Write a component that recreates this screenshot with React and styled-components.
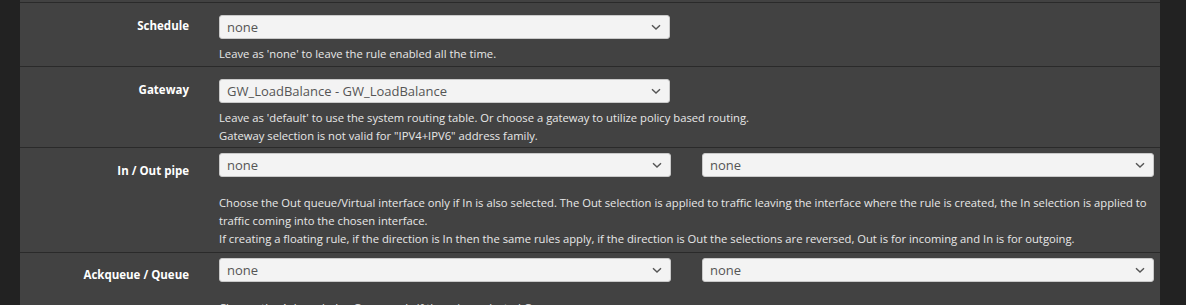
import React from "react";
import styled, { createGlobalStyle } from "styled-components";

const Global = createGlobalStyle`
  html, body {
    margin: 0;
    padding: 0;
    background: #222222;
    overflow: hidden;
  }
  body {
    font-family: "Open Sans", "Noto Sans", sans-serif;
  }
`;

/* ---------- page frame ---------- */
const Page = styled.div`
  display: flex;
  width: 1186px;
  height: 305px;
  background: #222222;
`;

const Panel = styled.div`
  margin-left: 20px;
  width: 1140px;
  background: #424242;
  padding-top: 2px;
`;

/* ---------- form rows ---------- */
const Row = styled.div`
  display: grid;
  grid-template-columns: 184px 1fr;
  border-top: 1px solid #2a2a2a;
  padding: ${(p) => p.$pad || "12px 0 4px"};
`;

const Label = styled.div`
  text-align: right;
  padding-right: 15px;
  padding-top: ${(p) => p.$top || "2px"};
  font-size: 11.5px;
  font-weight: 700;
  color: #ffffff;
  line-height: 18px;
`;

const Field = styled.div`
  padding-left: 15px;
  padding-right: 6px;
`;

const Pair = styled.div`
  display: grid;
  grid-template-columns: 1fr 1fr;
  column-gap: 31px;
`;

const Half = styled.div`
  width: 451px;
`;

const SelectBox = styled.div`
  display: flex;
  align-items: center;
  justify-content: space-between;
  height: 22px;
  padding: 0 8px 0 7px;
  background: #f3f3f3;
  border: 1px solid #c9c9c9;
  border-radius: 3px;
  font-size: 13px;
  color: #555555;
`;

const Help = styled.div`
  margin-top: ${(p) => p.$gap || "6px"};
  font-size: 11.25px;
  line-height: 18px;
  color: #e8e8e8;
`;

const Chevron = () => (
  <svg width="10" height="7" viewBox="0 0 10 7">
    <path d="M1 1.2 L5 5 L9 1.2" fill="none" stroke="#555" strokeWidth="1.4" />
  </svg>
);

const Select = ({ value }) => (
  <SelectBox>
    <span>{value}</span>
    <Chevron />
  </SelectBox>
);

export default function App() {
  return (
    <Page>
      <Global />
      <Panel>
        <Row $pad="12px 0 3px">
          <Label>Schedule</Label>
          <Field>
            <Half>
              <Select value="none" />
            </Half>
            <Help>Leave as 'none' to leave the rule enabled all the time.</Help>
          </Field>
        </Row>

        <Row $pad="12px 0 2px">
          <Label>Gateway</Label>
          <Field>
            <Half>
              <Select value="GW_LoadBalance - GW_LoadBalance" />
            </Half>
            <Help>
              Leave as 'default' to use the system routing table. Or choose a gateway to utilize
              policy based routing.
              <br />
              Gateway selection is not valid for "IPV4+IPV6" address family.
            </Help>
          </Field>
        </Row>

        <Row $pad="5px 0 4px">
          <Label $top="9px">In / Out pipe</Label>
          <Field>
            <Pair>
              <Select value="none" />
              <Select value="none" />
            </Pair>
            <Help $gap="17px">
              Choose the Out queue/Virtual interface only if In is also selected. The Out
              selection is applied to traffic leaving the interface where the rule is created,
              the In selection is applied to traffic coming into the chosen interface.
              <br />
              If creating a floating rule, if the direction is In then the same rules apply, if
              the direction is Out the selections are reversed, Out is for incoming and In is for
              outgoing.
            </Help>
          </Field>
        </Row>

        <Row $pad="5px 0 5px">
          <Label $top="8px">Ackqueue / Queue</Label>
          <Field>
            <Pair>
              <Select value="none" />
              <Select value="none" />
            </Pair>
            <Help $gap="17px">Choose the Acknowledge Queue only if there is a selected Queue.</Help>
          </Field>
        </Row>
      </Panel>
    </Page>
  );
}
